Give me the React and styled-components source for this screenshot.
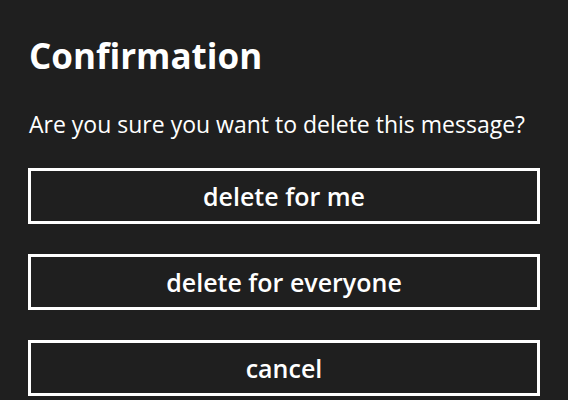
import React from "react";
import styled, { createGlobalStyle } from "styled-components";

const GlobalStyle = createGlobalStyle`
  html, body {
    margin: 0;
    padding: 0;
    background: #1f1f1f;
  }
`;

const Dialog = styled.div`
  width: 568px;
  height: 400px;
  box-sizing: border-box;
  padding: 34px 28px 0 28px;
  background: #1f1f1f;
  color: #ffffff;
  font-family: "Open Sans", "Noto Sans", sans-serif;
  overflow: hidden;
`;

const Title = styled.h1`
  margin: 0;
  font-size: 35px;
  font-weight: 700;
  line-height: 44px;
  padding-left: 1px;
`;

const Message = styled.p`
  margin: 31px 0 0 0;
  font-size: 23px;
  line-height: 30px;
  padding-left: 1px;
`;

const Actions = styled.div`
  display: flex;
  flex-direction: column;
  gap: 30px;
  margin-top: 29px;
`;

const Button = styled.button`
  width: 512px;
  height: 56px;
  box-sizing: border-box;
  border: 3px solid #ffffff;
  background: transparent;
  color: #ffffff;
  font-family: inherit;
  font-size: 25px;
  font-weight: 600;
  line-height: 50px;
  padding: 0;
`;

const actions = ["delete for me", "delete for everyone", "cancel"];

function App() {
  return (
    <>
      <GlobalStyle />
      <Dialog>
        <Title>Confirmation</Title>
        <Message>Are you sure you want to delete this message?</Message>
        <Actions>
          {actions.map((label) => (
            <Button key={label}>{label}</Button>
          ))}
        </Actions>
      </Dialog>
    </>
  );
}

export default App;
